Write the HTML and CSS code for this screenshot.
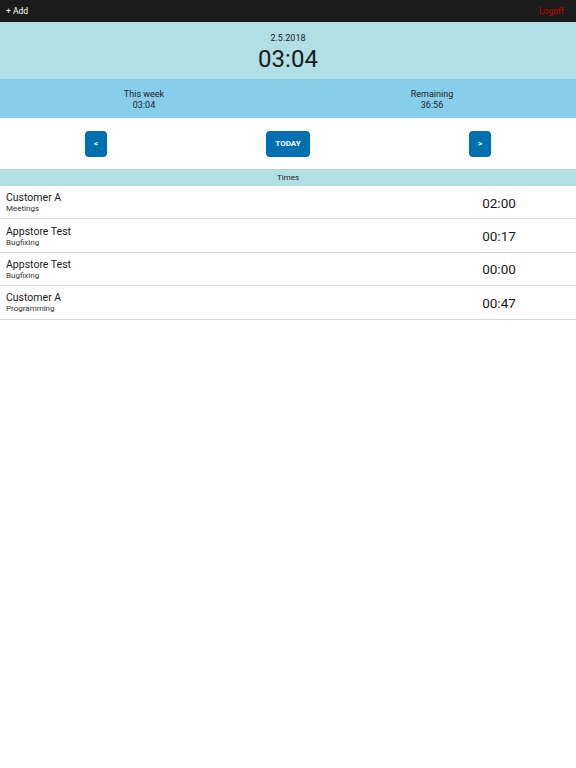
FILE: index.html
```html
<!DOCTYPE html>
<html lang="en">
<head>
  <meta charset="UTF-8" />
  <meta name="viewport" content="width=device-width, initial-scale=1.0"/>
  <title>Times</title>
  <link rel="stylesheet" href="styles.css">
</head>
<body>

  <div class="topbar">
    <span class="add">+ Add</span>
    <span class="logoff">Logoff</span>
  </div>

  <div class="day">
    <div class="day-date">2.5.2018</div>
    <div class="day-total">03:04</div>
  </div>

  <div class="stats">
    <div class="stat">
      <div>This week</div>
      <div>03:04</div>
    </div>
    <div class="stat">
      <div>Remaining</div>
      <div>36:56</div>
    </div>
  </div>

  <div class="nav">
    <div class="nav-cell"><button class="btn btn-small">&lt;</button></div>
    <div class="nav-cell"><button class="btn">TODAY</button></div>
    <div class="nav-cell"><button class="btn btn-small">&gt;</button></div>
  </div>

  <div class="section-title">Times</div>

  <div class="entries">
    <div class="entry">
      <div class="entry-text">
        <div class="entry-name">Customer A</div>
        <div class="entry-task">Meetings</div>
      </div>
      <div class="entry-time">02:00</div>
    </div>
    <div class="entry">
      <div class="entry-text">
        <div class="entry-name">Appstore Test</div>
        <div class="entry-task">Bugfixing</div>
      </div>
      <div class="entry-time">00:17</div>
    </div>
    <div class="entry">
      <div class="entry-text">
        <div class="entry-name">Appstore Test</div>
        <div class="entry-task">Bugfixing</div>
      </div>
      <div class="entry-time">00:00</div>
    </div>
    <div class="entry">
      <div class="entry-text">
        <div class="entry-name">Customer A</div>
        <div class="entry-task">Programming</div>
      </div>
      <div class="entry-time">00:47</div>
    </div>
  </div>

</body>
</html>
```

FILE: styles.css
```css
* {
  box-sizing: border-box;
  margin: 0;
  padding: 0;
}

body {
  font-family: Roboto, 'Liberation Sans', sans-serif;
  background-color: #fff;
  color: #1a1a1a;
}

.topbar {
  height: 22px;
  background-color: #1b1b1b;
  display: flex;
  align-items: center;
  justify-content: space-between;
  padding: 0 12px 0 6px;
  font-size: 8.5px;
}

.add {
  color: #fff;
}

.logoff {
  color: #d00000;
}

/* Day summary */
.day {
  height: 57px;
  background-color: #b0e0e6;
  display: flex;
  flex-direction: column;
  align-items: center;
  padding-top: 11px;
}

.day-date {
  font-size: 9px;
  line-height: 11px;
  color: #222;
}

.day-total {
  font-size: 24px;
  line-height: 30px;
}

.stats {
  height: 39px;
  background-color: #87ceeb;
  display: grid;
  grid-template-columns: 1fr 1fr;
  align-items: center;
  padding-top: 2px;
}

.stat {
  text-align: center;
  font-size: 9px;
  line-height: 11px;
  color: #222;
}

/* Navigation */
.nav {
  height: 52px;
  display: grid;
  grid-template-columns: repeat(3, 1fr);
  align-items: center;
  border-bottom: 1px solid #c8c8c8;
}

.nav-cell {
  display: flex;
  justify-content: center;
}

.btn {
  height: 26px;
  width: 44px;
  background-color: #0070b0;
  color: #fff;
  border: none;
  border-radius: 4px;
  font-family: inherit;
  font-size: 8px;
  font-weight: bold;
}

.btn-small {
  width: 22px;
}

.section-title {
  height: 16px;
  background-color: #b0e0e6;
  text-align: center;
  font-size: 8px;
  line-height: 16px;
  color: #222;
}

/* Entries */
.entry {
  height: 33.4px;
  display: flex;
  align-items: center;
  justify-content: space-between;
  border-bottom: 1px solid #d6d6d6;
  padding: 1px 0 0 6px;
}

.entry-name {
  font-size: 10.5px;
  line-height: 12px;
}

.entry-task {
  font-size: 8px;
  line-height: 9px;
  color: #333;
}

.entry-time {
  width: 154px;
  text-align: center;
  font-size: 13.5px;
}
```
